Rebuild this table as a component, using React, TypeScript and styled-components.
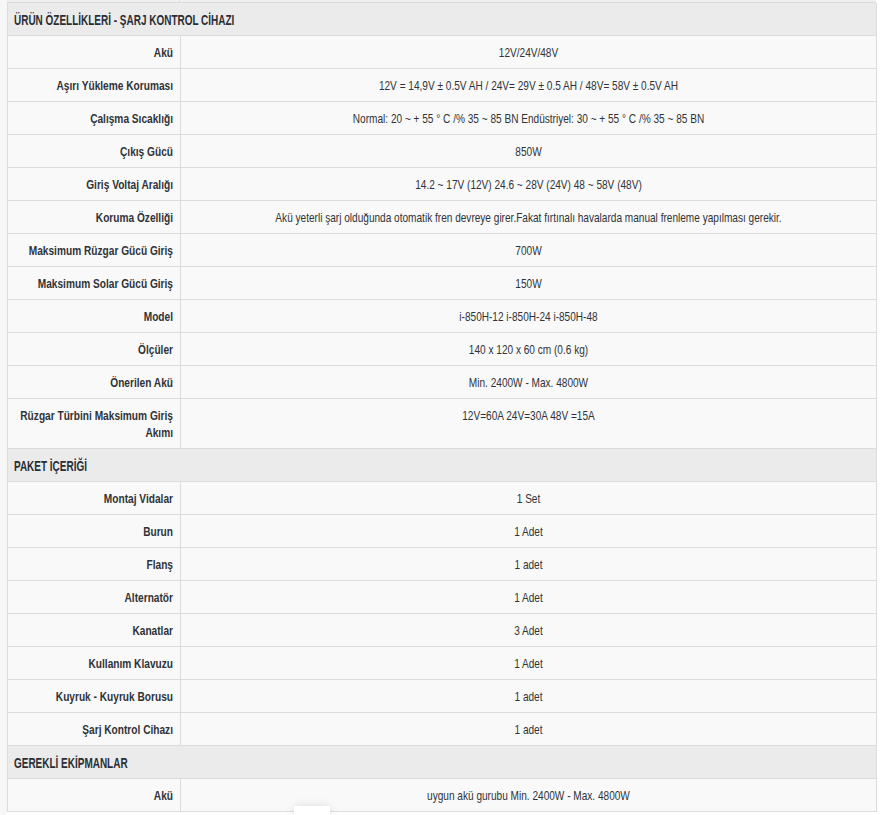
import React, { FC } from "react";
import styled, { createGlobalStyle } from "styled-components";

const GlobalStyle = createGlobalStyle`
  html, body {
    margin: 0;
    padding: 0;
    background: #fff;
  }
  body {
    font-family: "Liberation Sans", Arial, sans-serif;
    color: #2f3338;
  }
`;

type Row = [string, string];
type Section = { title: string; rows: Row[] };

const sections: Section[] = [
  {
    title: "ÜRÜN ÖZELLİKLERİ - ŞARJ KONTROL CİHAZI",
    rows: [
      ["Akü", "12V/24V/48V"],
      ["Aşırı Yükleme Koruması", "12V = 14,9V ± 0.5V AH / 24V= 29V ± 0.5 AH / 48V= 58V ± 0.5V AH"],
      ["Çalışma Sıcaklığı", "Normal: 20 ~ + 55 ° C /% 35 ~ 85 BN Endüstriyel: 30 ~ + 55 ° C /% 35 ~ 85 BN"],
      ["Çıkış Gücü", "850W"],
      ["Giriş Voltaj Aralığı", "14.2 ~ 17V (12V) 24.6 ~ 28V (24V) 48 ~ 58V (48V)"],
      ["Koruma Özelliği", "Akü yeterli şarj olduğunda otomatik fren devreye girer.Fakat fırtınalı havalarda manual frenleme yapılması gerekir."],
      ["Maksimum Rüzgar Gücü Giriş", "700W"],
      ["Maksimum Solar Gücü Giriş", "150W"],
      ["Model", "i-850H-12 i-850H-24 i-850H-48"],
      ["Ölçüler", "140 x 120 x 60 cm (0.6 kg)"],
      ["Önerilen Akü", "Min. 2400W - Max. 4800W"],
      ["Rüzgar Türbini Maksimum Giriş Akımı", "12V=60A 24V=30A 48V =15A"],
    ],
  },
  {
    title: "PAKET İÇERİĞİ",
    rows: [
      ["Montaj Vidalar", "1 Set"],
      ["Burun", "1 Adet"],
      ["Flanş", "1 adet"],
      ["Alternatör", "1 Adet"],
      ["Kanatlar", "3 Adet"],
      ["Kullanım Klavuzu", "1 Adet"],
      ["Kuyruk - Kuyruk Borusu", "1 adet"],
      ["Şarj Kontrol Cihazı", "1 adet"],
    ],
  },
  {
    title: "GEREKLİ EKİPMANLAR",
    rows: [["Akü", "uygun akü gurubu Min. 2400W - Max. 4800W"]],
  },
];

const Page = styled.div`
  position: relative;
  padding: 0 7px;
  height: 815px;
  overflow: hidden;
  background: linear-gradient(to right, #f7f7f7 0, #f7f7f7 7px, #fff 7px);
`;

const TopStrip = styled.div`
  width: 869px;
  height: 2px;
  background: #f0f0f0;
  border-bottom: 1px solid #dcdcdc;
  display: grid;
  grid-template-columns: 173px 1fr;
  & > div:first-child {
    border-right: 1px solid #dcdcdc;
  }
`;

const Table = styled.table`
  width: 870px;
  border-collapse: collapse;
  table-layout: fixed;
  font-size: 13px;
`;

// the reference uses a condensed face; squeeze the text horizontally
const Squeeze = styled.div<{ $scale: number }>`
  width: calc(100% / ${(p) => p.$scale});
  transform: scaleX(${(p) => p.$scale});
  transform-origin: left center;
`;

const HeadCell = styled.th`
  background: #ebebeb;
  border: 1px solid #dcdcdc;
  border-top: none;
  text-align: left;
  padding: 8px 6px 7px;
  font-size: 15px;
  line-height: 17px;
  font-weight: 700;
  color: #2b2f35;
`;

const Cell = styled.td<{ $label?: boolean }>`
  background: #f9f9f9;
  border: 1px solid #dcdcdc;
  text-align: ${(p) => (p.$label ? "right" : "center")};
  vertical-align: top;
  padding: 8px 7px 7px;
  line-height: 17px;
  font-weight: ${(p) => (p.$label ? 700 : 400)};
  color: #2f3338;
`;

const ScrollTab = styled.div`
  position: absolute;
  left: 294px;
  top: 806px;
  width: 36px;
  height: 12px;
  background: #fff;
  box-shadow: 0 0 10px rgba(0, 0, 0, 0.12);
`;

const App: FC = () => (
  <>
    <GlobalStyle />
    <Page>
      <TopStrip>
        <div />
        <div />
      </TopStrip>
      <Table>
        <colgroup>
          <col style={{ width: 173 }} />
          <col />
        </colgroup>
        {sections.map((s) => (
          <tbody key={s.title}>
            <tr>
              <HeadCell colSpan={2}>
                <Squeeze $scale={0.665}>{s.title}</Squeeze>
              </HeadCell>
            </tr>
            {s.rows.map(([k, v], i) => (
              <tr key={k + i}>
                <Cell $label>
                  <Squeeze $scale={0.78}>{k}</Squeeze>
                </Cell>
                <Cell>
                  <Squeeze $scale={0.775}>{v}</Squeeze>
                </Cell>
              </tr>
            ))}
          </tbody>
        ))}
      </Table>
      <ScrollTab />
    </Page>
  </>
);

export default App;
